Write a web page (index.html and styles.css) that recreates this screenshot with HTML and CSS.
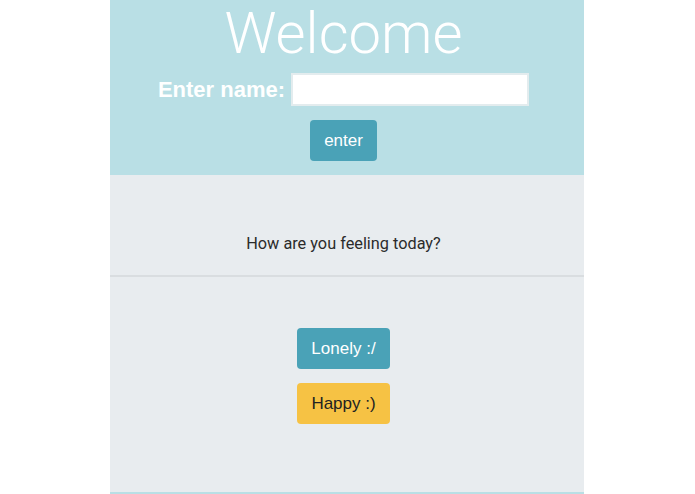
FILE: index.html
```html
<!DOCTYPE html>
<html>
<head>
<meta charset="utf-8">
<link rel="stylesheet" href="styles.css">
</head>
<body>
<div class="page">
  <header class="hero">
    <h1 class="title">Welcome</h1>
    <div class="name-row">
      <label class="name-label">Enter name:</label>
      <input class="name-input" type="text">
    </div>
    <button class="btn btn-info btn-enter">enter</button>
  </header>
  <section class="question">
    <p class="question-text">How are you feeling today?</p>
  </section>
  <section class="choices">
    <button class="btn btn-info btn-choice">Lonely :/</button>
    <button class="btn btn-warning btn-choice">Happy :)</button>
  </section>
</div>
</body>
</html>
```

FILE: styles.css
```css
html, body {
  margin: 0;
  padding: 0;
  background: #ffffff;
}
body {
  font-family: "Liberation Sans", Arial, sans-serif;
}
.page {
  width: 474px;
  margin: 0 auto 0 110px;
  height: 494px;
  background: #e8ecef;
}
.hero {
  background: #b9dfe5;
  height: 175px;
  box-sizing: border-box;
  padding: 0 7px 0 0;
  display: flex;
  flex-direction: column;
  align-items: center;
}
.title {
  margin: -1px 0 0 0;
  font-family: Roboto, "Liberation Sans", sans-serif;
  font-weight: 300;
  font-size: 58px;
  line-height: 68px;
  color: #ffffff;
  height: 68px;
}
.name-row {
  display: flex;
  align-items: center;
  gap: 6px;
  margin-top: 6px;
  height: 33px;
}
.name-label {
  color: #ffffff;
  font-weight: bold;
  font-size: 22px;
}
.name-input {
  box-sizing: border-box;
  width: 238px;
  height: 33px;
  border: 2px solid #e3ecee;
  background: #ffffff;
  margin: 0;
  padding: 0;
}
.btn {
  border: none;
  border-radius: 4px;
  font-family: "Liberation Sans", Arial, sans-serif;
  font-size: 17px;
  padding: 0;
  cursor: pointer;
}
.btn-info {
  background: #4aa2b7;
  color: #ffffff;
}
.btn-warning {
  background: #f6c244;
  color: #222222;
}
.btn-enter {
  margin-top: 14px;
  width: 67px;
  height: 41px;
}
.question {
  height: 102px;
  box-sizing: border-box;
  border-bottom: 2px solid #d9dde0;
  display: flex;
  align-items: flex-end;
  justify-content: center;
  padding: 0 7px 22px 0;
}
.question-text {
  margin: 0;
  font-family: Roboto, "Liberation Sans", sans-serif;
  font-size: 16.3px;
  color: #2b2b2b;
}
.choices {
  height: 217px;
  box-sizing: border-box;
  border-bottom: 2px solid #b9dfe5;
  display: flex;
  flex-direction: column;
  align-items: center;
  gap: 14px;
  padding: 51px 7px 0 0;
}
.btn-choice {
  width: 93px;
  height: 41px;
}
```
